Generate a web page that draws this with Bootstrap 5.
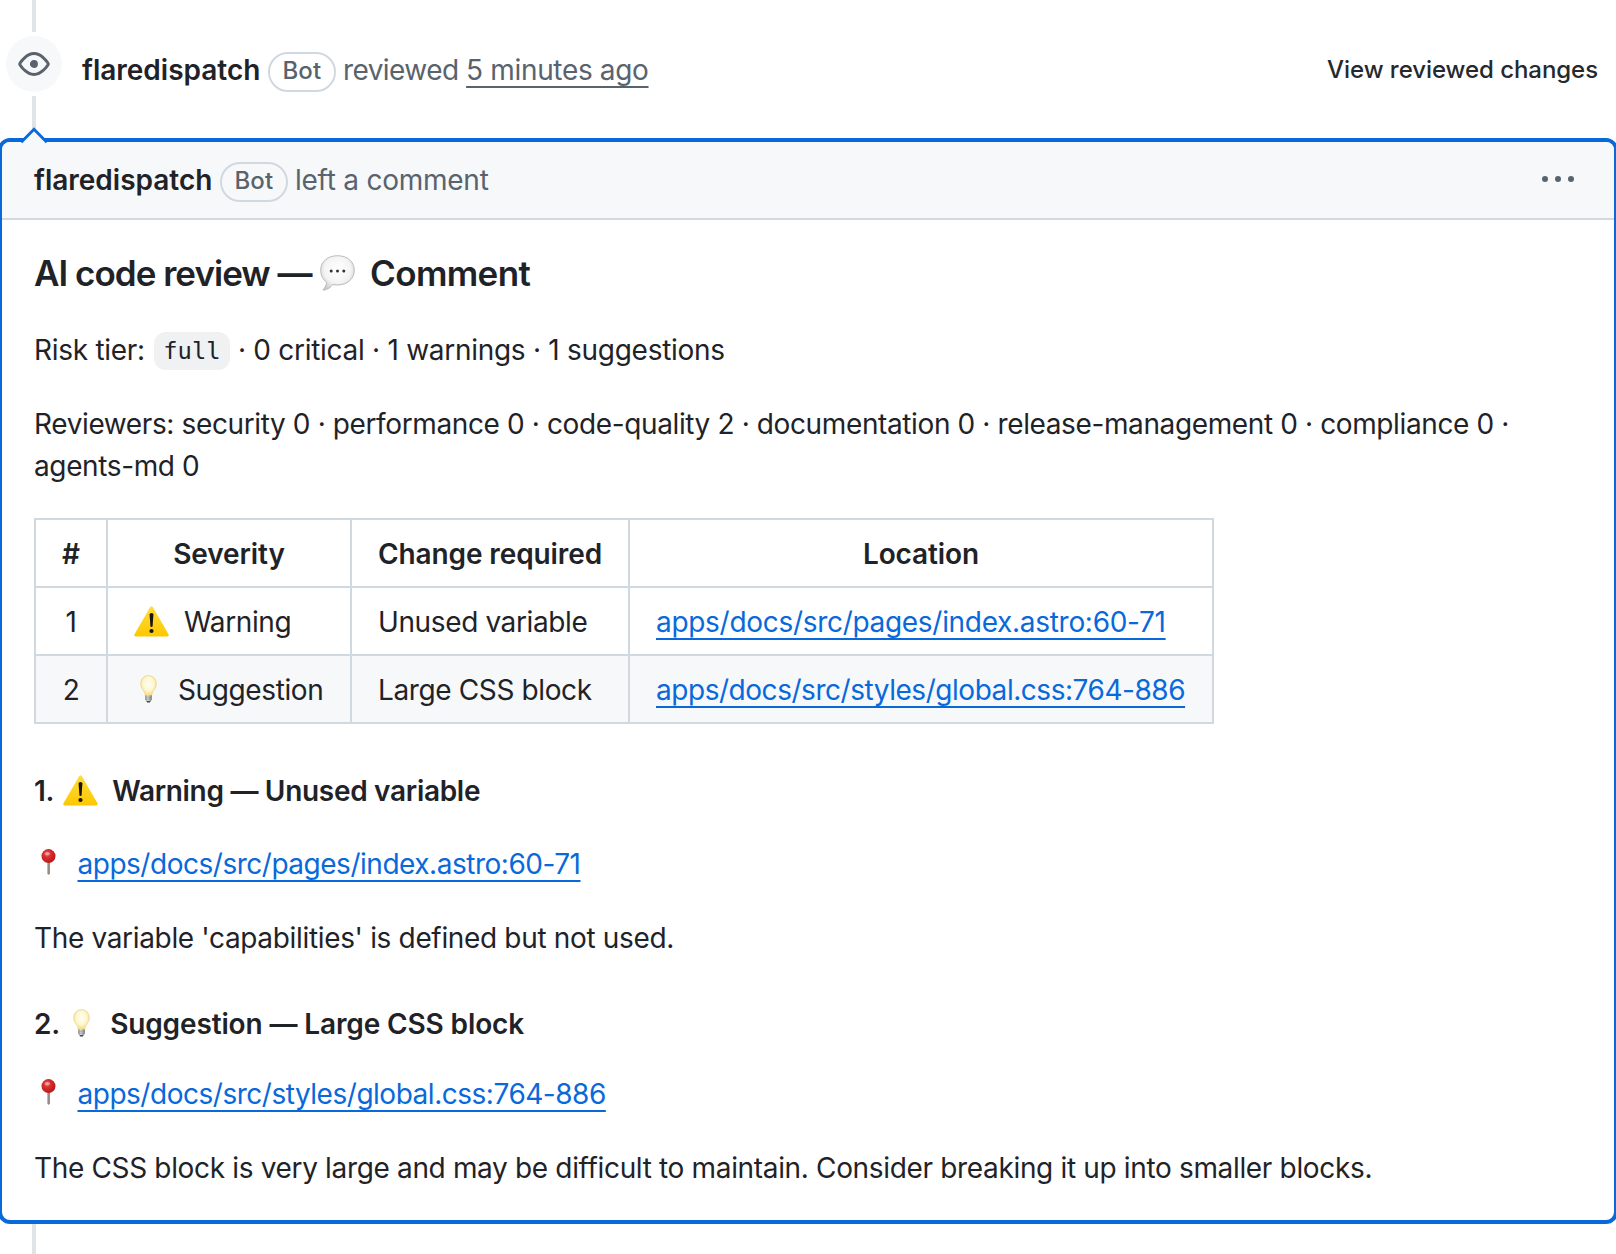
<!DOCTYPE html>
<html lang="en">
<head>
<meta charset="utf-8">
<meta name="viewport" content="width=device-width, initial-scale=1">
<title>AI code review</title>
<link href="https://cdn.jsdelivr.net/npm/bootstrap@5.3.0/dist/css/bootstrap.min.css" rel="stylesheet">
<style>
  :root { --ink:#1f2328; --muted:#59636e; --line:#d1d9e0; --accent:#0969da; --subtle:#f6f8fa; }
  body { font-family:Inter,"Liberation Sans",sans-serif; font-size:28px; line-height:42px; letter-spacing:-.34px; color:var(--ink); background:#fff; overflow:hidden; }
  .muted { color:var(--muted); }
  .author { font-weight:600; letter-spacing:0; color:var(--ink); }
  .review-head { height:138px; }
  .rail { width:68px; }
  .rail-line { width:4px; background:#dfe4e9; }
  .rail-icon { width:56px; height:56px; margin:4px 0; background:var(--subtle); }
  .review-title { padding:49px 0 0 14px; }
  .bot-pill { display:inline-block; width:68px; height:40px; border:2px solid var(--line); border-radius:20px; font-size:24px; font-weight:500; line-height:34px; letter-spacing:.2px; text-align:center; color:var(--muted); margin:-1px 6.5px 0 8px; padding-right:1px; vertical-align:1px; }
  .ago { text-decoration:underline 2px; text-underline-offset:6px; text-decoration-skip-ink:none; color:var(--muted); margin-left:7.5px; }
  .verb { letter-spacing:-.55px; }
  .left-note { letter-spacing:-.24px; }
  .view-changes { font-size:24px; font-weight:500; letter-spacing:-.06px; color:#25292e; padding:48.5px 18px 0 0; }
  .comment-card { margin:0 -2px; border:4px solid var(--accent); border-radius:12px; height:1086px; --bs-card-bg:#fff; letter-spacing:inherit; color:inherit; }
  .comment-head { height:78px; padding:17px 32px 0; border-bottom:2px solid var(--line); background:var(--subtle); border-radius:8px 8px 0 0; }
  .caret { position:absolute; left:14px; top:-18px; }
  .comment-main { padding:32px 32px 0; }
  .title { font-size:35px; font-weight:600; line-height:43px; height:45px; margin:0 0 32px; letter-spacing:-.98px; }
  .title span { letter-spacing:-.65px; }
  .title svg { margin:-3px 15px 0 8.5px; }
  .comment-main p { margin:0 0 32px; }
  .risk { height:42px; letter-spacing:-.28px; }
  .reviewers { letter-spacing:-.38px; }
  .tier { display:inline-block; font-family:"DejaVu Sans Mono",monospace; font-size:23.8px; line-height:38px; height:38px; width:76px; text-align:center; letter-spacing:0; border-radius:12px; background:#eff1f3; color:var(--ink); margin:-4px 8px -3px 9px; vertical-align:1px; }
  .file-link { color:var(--accent); text-decoration:underline 2px; text-underline-offset:6px; text-decoration-skip-ink:none; letter-spacing:-.48px; }
  .findings { width:1180px; table-layout:fixed; border-collapse:collapse; margin:-1px 0 49px; --bs-table-bg:transparent; --bs-table-color:var(--ink); border-color:var(--line); letter-spacing:-.38px; }
  .findings > :not(caption) > * { border-width:0; }
  .findings > :not(caption) > * > * { padding:13px 20px 11px 26px; border:2px solid var(--line); line-height:42px; height:68px; white-space:nowrap; box-shadow:none; }
  .findings > :not(caption) > * > .mid { padding:13px 12px 11px; text-align:center; }
  .findings th { font-weight:600; letter-spacing:-.1px; }
  .findings .alt-row { background:var(--subtle); }
  .findings .file-link { letter-spacing:-.3px; }
  .findings .alt-row .file-link { letter-spacing:-.46px; }
  .item { font-size:28px; font-weight:600; line-height:35px; height:34px; margin:48px 0 32px; letter-spacing:-.3px; }
  .item.first { height:38px; padding-top:1px; }
  .item.second { letter-spacing:-.13px; }
  .e-warn { width:35px; height:31px; vertical-align:-5px; }
  .e-bulb { width:17px; height:28px; vertical-align:-3px; }
  .e-talk { width:35px; height:36px; }
  .e-pin { width:15px; height:26px; vertical-align:-1px; margin:0 22px 0 6.5px; }
  .findings .e-warn { margin-right:15px; }
  .findings .e-bulb { margin:0 21px 0 6px; }
  .first .e-warn { margin:0 14px 0 9px; }
  .second .e-bulb { margin:0 20px 0 13px; }
  .place { height:42px; white-space:nowrap; }
</style>
<script src="https://cdn.jsdelivr.net/npm/bootstrap@5.3.0/dist/js/bootstrap.bundle.min.js"></script>
</head>
<body>
<svg width="0" height="0" class="position-absolute" aria-hidden="true">
  <defs>
    <linearGradient id="gWarn" x1="0" y1="0" x2="0" y2="1"><stop offset="0" stop-color="#ffdc3e"/><stop offset="1" stop-color="#fdc800"/></linearGradient>
    <radialGradient id="gBulb" cx=".5" cy=".42" r=".55"><stop offset="0" stop-color="#fffef4"/><stop offset=".6" stop-color="#fff7d2"/><stop offset="1" stop-color="#f6dc86"/></radialGradient>
    <linearGradient id="gBase" x1="0" y1="0" x2="1" y2="0"><stop offset="0" stop-color="#8d8d8d"/><stop offset=".4" stop-color="#e2e2e2"/><stop offset="1" stop-color="#777"/></linearGradient>
    <radialGradient id="gTalk" cx=".5" cy=".4" r=".6"><stop offset="0" stop-color="#fff"/><stop offset=".65" stop-color="#f4f4f4"/><stop offset="1" stop-color="#cfcfcf"/></radialGradient>
    <radialGradient id="gPin" cx=".4" cy=".35" r=".65"><stop offset="0" stop-color="#f4807a"/><stop offset=".35" stop-color="#dc3030"/><stop offset="1" stop-color="#b51a1c"/></radialGradient>
    <linearGradient id="gNeedle" x1="0" y1="0" x2="1" y2="0"><stop offset="0" stop-color="#b9b0a8"/><stop offset="1" stop-color="#756a63"/></linearGradient>
  </defs>
  <symbol id="warn" viewBox="0 0 35 31">
    <path d="M16.1 1.2Q17.5-.7 18.9 1.2L34.5 28.2Q35.4 30.3 33.3 30.4H1.7Q-.4 30.3.5 28.2Z" fill="url(#gWarn)"/>
    <path d="M15.6 8.5Q15.6 7 17.5 7T19.4 8.5L18.6 20.2Q18.5 21 17.5 21T16.4 20.2Z" fill="#17150c"/><circle cx="17.5" cy="25" r="2.1" fill="#17150c"/>
  </symbol>
  <symbol id="bulb" viewBox="0 0 17 28">
    <path d="M5.3 20.5C5.2 16 .6 14 .6 8.6A7.9 8.1 0 0 1 16.4 8.6C16.4 14 11.8 16 11.7 20.5Z" fill="url(#gBulb)" stroke="#f0d88f" stroke-width=".8"/>
    <path d="M5.2 20.2H11.8V24.3Q11.3 25.8 10.5 26.2H6.5Q5.7 25.8 5.2 24.3Z" fill="url(#gBase)"/>
    <path d="M6.3 26H10.7L9.8 27.6H7.2Z" fill="#484848"/><path d="M5.2 22.2H11.8M5.4 24.2H11.6" stroke="#8b8b8b" stroke-width=".6"/>
  </symbol>
  <symbol id="talk" viewBox="0 0 35 36">
    <path d="M17.5.7C27.3.7 34.3 6.6 34.3 15.2S27.3 30 17.5 30Q15 30 12.8 29.5C10.8 32.5 7.3 34.7 3.5 35.2 3 35.2 3 34.8 3.3 34.4 5.3 32.2 6.4 30 6.6 27.2 2.8 24.5.7 20.5.7 15.2.7 6.6 7.7.7 17.5.7Z" fill="url(#gTalk)" stroke="#b4b4b4" stroke-width=".9"/>
    <g fill="#333"><circle cx="11.2" cy="16" r="1.5"/><circle cx="17.5" cy="16" r="1.5"/><circle cx="23.8" cy="16" r="1.5"/></g>
  </symbol>
  <symbol id="pin" viewBox="0 0 15 26">
    <path d="M6.2 12H8.8V24.5L7.5 26 6.2 24.5Z" fill="url(#gNeedle)"/>
    <circle cx="7.5" cy="7.1" r="7" fill="url(#gPin)"/><ellipse cx="6.4" cy="4.6" rx="2.8" ry="1.6" fill="#fff" opacity=".35"/>
  </symbol>
</svg>

<header class="review-head d-flex">
  <div class="rail d-flex flex-column align-items-center flex-shrink-0">
    <div class="rail-line" style="height:32px"></div>
    <div class="rail-icon rounded-circle d-flex align-items-center justify-content-center flex-shrink-0">
      <svg width="32" height="32" viewBox="0 0 16 16" fill="#59636e"><path d="M8 2c1.981 0 3.671.992 4.933 2.078 1.27 1.091 2.187 2.345 2.637 3.023a1.62 1.62 0 0 1 0 1.798c-.45.678-1.367 1.932-2.637 3.023C11.67 13.008 9.981 14 8 14c-1.981 0-3.671-.992-4.933-2.078C1.797 10.83.88 9.576.43 8.898a1.62 1.62 0 0 1 0-1.798c.45-.677 1.367-1.931 2.637-3.022C4.33 2.992 6.019 2 8 2ZM1.679 7.932a.12.12 0 0 0 0 .136c.411.622 1.241 1.75 2.366 2.717C5.176 11.758 6.527 12.5 8 12.5c1.473 0 2.825-.742 3.955-1.715 1.124-.967 1.954-2.096 2.366-2.717a.12.12 0 0 0 0-.136c-.412-.621-1.242-1.75-2.366-2.717C10.824 4.242 9.473 3.5 8 3.5c-1.473 0-2.825.742-3.955 1.715-1.124.967-1.954 2.096-2.366 2.717ZM8 10a2 2 0 1 1-.001-3.999A2 2 0 0 1 8 10Z"/></svg>
    </div>
    <div class="rail-line flex-grow-1"></div>
  </div>
  <div class="review-title flex-grow-1 muted"><span class="author">flaredispatch</span><span class="bot-pill">Bot</span><span class="verb">reviewed</span><a class="ago">5 minutes ago</a></div>
  <div class="view-changes">View reviewed changes</div>
</header>

<main class="card comment-card">
  <svg class="caret" width="36" height="22" viewBox="0 0 36 22"><path d="M6 18 18 6 30 18V22H6Z" fill="#f6f8fa"/><path d="M5.2 18.2 18 5.2 30.8 18.2" fill="none" stroke="#0969da" stroke-width="2.8"/></svg>
  <div class="comment-head d-flex justify-content-between flex-shrink-0">
    <div class="muted"><span class="author">flaredispatch</span><span class="bot-pill">Bot</span><span class="left-note">left a comment</span></div>
    <svg width="44" height="40" viewBox="0 0 44 40" fill="#59636e"><circle cx="7" cy="20" r="3"/><circle cx="20" cy="20" r="3"/><circle cx="33" cy="20" r="3"/></svg>
  </div>
  <div class="comment-main">
    <h3 class="title d-flex align-items-start">AI code review —<svg class="e-talk align-self-center"><use href="#talk"/></svg><span>Comment</span></h3>
    <p class="risk">Risk tier:<code class="tier">full</code>· 0 critical · 1 warnings · 1 suggestions</p>
    <p class="reviewers">Reviewers: security 0 · performance 0 · code-quality 2 · documentation 0 · release-management 0 · compliance 0 · agents-md 0</p>
    <table class="table table-bordered findings">
      <colgroup><col style="width:72px"><col style="width:244px"><col style="width:278px"><col></colgroup>
      <thead><tr><th class="mid">#</th><th class="mid">Severity</th><th class="mid">Change required</th><th class="mid">Location</th></tr></thead>
      <tbody>
        <tr><td class="mid">1</td><td><svg class="e-warn"><use href="#warn"/></svg>Warning</td><td>Unused variable</td><td><a class="file-link" href="#">apps/docs/src/pages/index.astro:60-71</a></td></tr>
        <tr class="alt-row"><td class="mid">2</td><td><svg class="e-bulb"><use href="#bulb"/></svg>Suggestion</td><td>Large CSS block</td><td><a class="file-link" href="#">apps/docs/src/styles/global.css:764-886</a></td></tr>
      </tbody>
    </table>
    <h4 class="item first">1.<svg class="e-warn"><use href="#warn"/></svg>Warning — Unused variable</h4>
    <p class="place"><svg class="e-pin"><use href="#pin"/></svg><a class="file-link" href="#">apps/docs/src/pages/index.astro:60-71</a></p>
    <p>The variable 'capabilities' is defined but not used.</p>
    <h4 class="item second">2.<svg class="e-bulb"><use href="#bulb"/></svg>Suggestion — Large CSS block</h4>
    <p class="place"><svg class="e-pin"><use href="#pin"/></svg><a class="file-link" href="#">apps/docs/src/styles/global.css:764-886</a></p>
    <p>The CSS block is very large and may be difficult to maintain. Consider breaking it up into smaller blocks.</p>
  </div>
</main>
<footer class="rail d-flex justify-content-center"><div class="rail-line" style="height:30px"></div></footer>
</body>
</html>
